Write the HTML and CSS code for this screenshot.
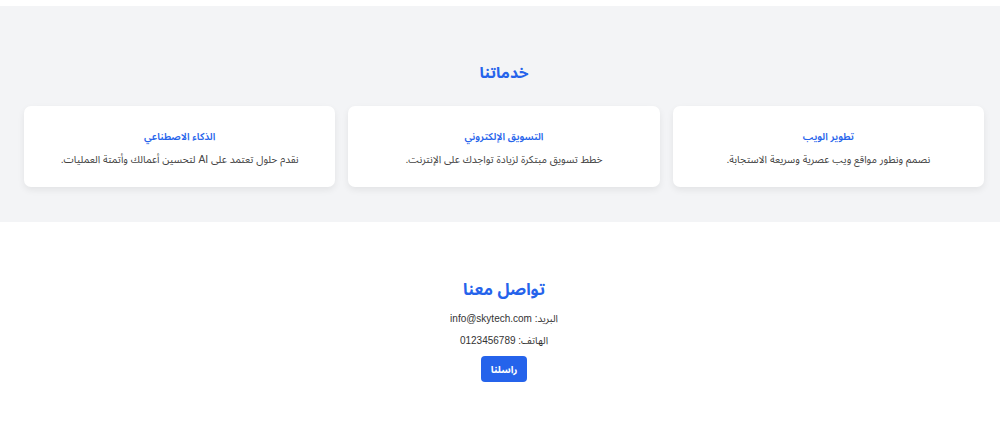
FILE: index.html
```html
<!DOCTYPE html>
<html lang="ar" dir="rtl">
<head>
<meta charset="utf-8">
<title>SkyTech</title>
<link rel="stylesheet" href="styles.css">
</head>
<body>
<div class="top-strip"></div>
<section class="services">
  <h2 class="section-title">خدماتنا</h2>
  <div class="cards">
    <div class="card">
      <h3 class="card-title">تطوير الويب</h3>
      <p class="card-text">نصمم ونطور مواقع ويب عصرية وسريعة الاستجابة.</p>
    </div>
    <div class="card">
      <h3 class="card-title">التسويق الإلكتروني</h3>
      <p class="card-text">خطط تسويق مبتكرة لزيادة تواجدك على الإنترنت.</p>
    </div>
    <div class="card">
      <h3 class="card-title">الذكاء الاصطناعي</h3>
      <p class="card-text">نقدم حلول تعتمد على AI لتحسين أعمالك وأتمتة العمليات.</p>
    </div>
  </div>
</section>
<section class="contact">
  <h2 class="contact-title">تواصل معنا</h2>
  <p class="contact-line">البريد: info@skytech.com</p>
  <p class="contact-line">الهاتف: 0123456789</p>
  <button class="btn">راسلنا</button>
</section>
</body>
</html>
```
FILE: styles.css
```css
* { box-sizing: border-box; }
html, body { margin: 0; padding: 0; }
body {
  font-family: "Liberation Sans", "Noto Sans Arabic", "Noto Sans Arabic UI", "DejaVu Sans", sans-serif;
  background: #ffffff;
  color: #333;
}
.top-strip { height: 6px; background: #fff; }
.services {
  background: #f3f4f6;
  padding: 50px 16px 35px 24px;
  text-align: center;
}
.section-title {
  margin: 0 0 17px;
  font-size: 15.5px;
  line-height: 33px;
  color: #2563eb;
  font-weight: 700;
}
.cards {
  display: grid;
  grid-template-columns: repeat(3, 1fr);
  gap: 13px;
}
.card {
  background: #fff;
  border-radius: 7px;
  box-shadow: 0 3px 7px rgba(0,0,0,0.07);
  padding: 21px 16px 17px;
  height: 81px;
}
.card-title {
  margin: 0 0 3px;
  font-size: 10px;
  line-height: 20px;
  color: #2563eb;
  font-weight: 600;
}
.card-text {
  margin: 0;
  font-size: 10.3px;
  line-height: 20px;
  color: #444;
}
.contact {
  text-align: center;
  padding: 52px 16px 40px 24px;
}
.contact-title {
  margin: 0 0 5px;
  font-size: 16.3px;
  line-height: 30px;
  color: #2563eb;
  font-weight: 700;
}
.contact-line {
  margin: 0 0 2px;
  font-size: 10px;
  line-height: 20px;
  color: #333;
}
.btn {
  display: block;
  margin: 5px auto 0;
  background: #2563eb;
  color: #fff;
  border: none;
  border-radius: 4px;
  height: 26px;
  width: 46px;
  padding: 0;
  font-family: inherit;
  font-size: 10px;
  font-weight: 700;
}
```
